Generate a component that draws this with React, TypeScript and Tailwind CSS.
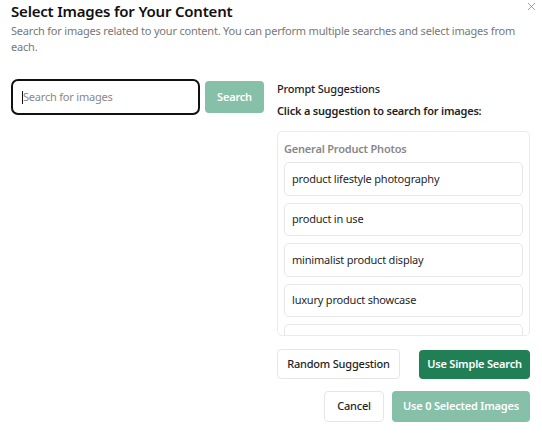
import { X } from "lucide-react";

const suggestions = [
  "product lifestyle photography",
  "product in use",
  "minimalist product display",
  "luxury product showcase",
  "product on white background",
];

export default function App() {
  return (
    <div
      className="relative h-[438px] w-[542px] overflow-hidden bg-white px-[11px] tracking-[-0.2px] text-[#1f1f1f]"
      style={{ fontFamily: '"Segoe UI", "Noto Sans", sans-serif' }}
    >
      <button className="absolute right-[4px] top-[0px] text-[#777]">
        <X size={13} strokeWidth={1.3} />
      </button>
      <header className="pt-[1px]">
        <h1 className="text-[15px] font-semibold leading-[20px] text-[#111]">
          Select Images for Your Content
        </h1>
        <p className="mt-[2px] text-[11px] leading-[16px] text-[#777]">
          Search for images related to your content. You can perform multiple searches and select images from each.
        </p>
      </header>

      <div className="mt-[24px] grid grid-cols-[253px_253px] gap-[13px]">
        <div className="flex items-start gap-[5px]">
          <div className="flex h-[36px] w-[189px] items-center rounded-[7px] border-2 border-[#111] pl-[9px]">
            <span className="h-[13px] w-px bg-[#111]" />
            <span className="text-[11px] text-[#888]">Search for images</span>
          </div>
          <button className="mt-[2px] h-[32px] w-[59px] rounded-[4px] bg-[#86c0a9] text-[11px] font-semibold text-white">
            Search
          </button>
        </div>

        <div className="w-[253px]">
          <div className="mt-[2px] text-[11px] font-medium leading-[16px]">Prompt Suggestions</div>
          <div className="mt-[6px] text-[11px] font-semibold leading-[16px]">
            Click a suggestion to search for images:
          </div>
          <div className="mt-[12px] h-[205px] overflow-hidden rounded-[5px] border border-[#ebebeb] px-[6px] pt-[9px]">
            <div className="text-[11px] font-semibold leading-[16px] text-[#888]">General Product Photos</div>
            <div className="mt-[5px] flex flex-col gap-[7px]">
              {suggestions.map((s) => (
                <div
                  key={s}
                  className="flex h-[33.5px] shrink-0 items-center rounded-[5px] border border-[#e6e6e6] px-[7px] text-[11px]"
                >
                  {s}
                </div>
              ))}
            </div>
          </div>

          <div className="mt-[13px] flex items-center justify-between">
            <button className="h-[30px] w-[123px] rounded-[4px] border border-[#e6e6e6] bg-white text-[11px] font-medium">
              Random Suggestion
            </button>
            <button className="h-[29px] w-[111px] rounded-[4px] bg-[#217f56] text-[11px] font-semibold text-white">
              Use Simple Search
            </button>
          </div>

          <div className="mt-[12px] flex justify-end gap-[8px]">
            <button className="h-[31px] w-[60px] rounded-[4px] border border-[#e6e6e6] bg-white text-[11px] font-medium">
              Cancel
            </button>
            <button className="h-[31px] w-[138px] rounded-[4px] bg-[#86c0a9] text-[11px] font-semibold text-white">
              Use 0 Selected Images
            </button>
          </div>
        </div>
      </div>
    </div>
  );
}
